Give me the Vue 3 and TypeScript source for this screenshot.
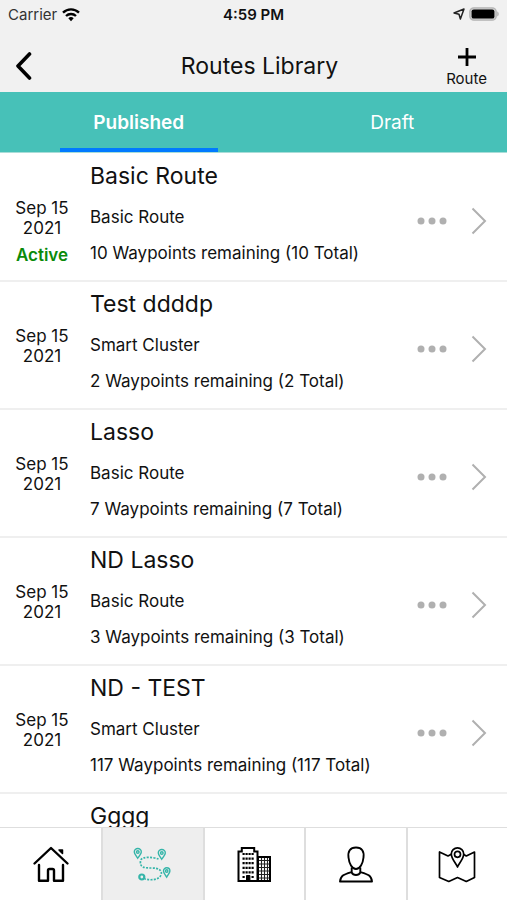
<script setup lang="ts">
import { ref } from 'vue'

interface RouteItem {
  name: string
  day?: string
  year?: string
  kind?: string
  remaining?: number
  total?: number
  active?: boolean
}

const tabs = ['Published', 'Draft']
const currentTab = ref('Published')
const currentPage = ref('Routes')

const routes: RouteItem[] = [
  { name: 'Basic Route', day: 'Sep 15', year: '2021', kind: 'Basic Route', remaining: 10, total: 10, active: true },
  { name: 'Test ddddp', day: 'Sep 15', year: '2021', kind: 'Smart Cluster', remaining: 2, total: 2 },
  { name: 'Lasso', day: 'Sep 15', year: '2021', kind: 'Basic Route', remaining: 7, total: 7 },
  { name: 'ND Lasso', day: 'Sep 15', year: '2021', kind: 'Basic Route', remaining: 3, total: 3 },
  { name: 'ND - TEST', day: 'Sep 15', year: '2021', kind: 'Smart Cluster', remaining: 117, total: 117 },
  { name: 'Gggg' },
]

const pages = ['Home', 'Routes', 'Companies', 'Profile', 'Map']
const windowRows = [0, 1, 2, 3, 4]
</script>

<template>
  <div class="screen">
    <div class="status">
      <div class="carrier">
        <span>Carrier</span>
        <svg width="20" height="15" viewBox="0 0 20 15" aria-hidden="true">
          <path d="M2 5.6a11.6 11.6 0 0 1 16 0" fill="none" stroke="#000" stroke-width="2.4" />
          <path d="M5 9a7.2 7.2 0 0 1 10 0" fill="none" stroke="#000" stroke-width="2.3" />
          <path d="M7.3 11.3a4 4 0 0 1 5.4 0L10 14.2z" />
        </svg>
      </div>
      <strong>4:59 PM</strong>
      <div class="power">
        <svg width="12" height="12" viewBox="0 0 12 12" aria-hidden="true">
          <path d="M11 1 7.4 11 6 6.2 1 5z" fill="none" stroke="#222" stroke-width="1.5" stroke-linejoin="round" />
        </svg>
        <svg width="30" height="14" viewBox="0 0 30 14" aria-hidden="true">
          <rect x=".8" y=".8" width="26.4" height="12.4" rx="4" fill="#ccc" stroke="#b5b5b5" stroke-width="1.3" />
          <rect x="2.6" y="2.4" width="22.8" height="9.2" rx="2.2" />
          <path d="M28.3 4.6c1.8.6 1.8 4.2 0 4.8z" fill="#aaa" />
        </svg>
      </div>
    </div>

    <header class="header">
      <button class="back" type="button" aria-label="Back">
        <svg width="18" height="28" viewBox="0 0 18 28" aria-hidden="true">
          <path d="M13.500 2 2 14l11.500 12" fill="none" stroke="#000" stroke-width="3.600" stroke-linecap="round" stroke-linejoin="round" />
        </svg>
      </button>
      <h1>Routes Library</h1>
      <button class="add" type="button">
        <svg width="20" height="20" viewBox="0 0 20 20" aria-hidden="true">
          <path d="M10 1v18M1 10h18" stroke="#000" stroke-width="2.8" />
        </svg>
        <span>Route</span>
      </button>
    </header>

    <nav class="tabs">
      <button
        v-for="tab in tabs"
        :key="tab"
        type="button"
        :class="['tab', { selected: tab === currentTab }]"
        @click="currentTab = tab"
      >
        <span>{{ tab }}</span>
      </button>
    </nav>

    <main class="list">
      <article v-for="route in routes" :key="route.name" class="route">
        <div class="date">
          <span v-if="route.day">{{ route.day }}</span>
          <span v-if="route.year">{{ route.year }}</span>
          <strong v-if="route.active">Active</strong>
        </div>
        <div class="info">
          <h2>{{ route.name }}</h2>
          <template v-if="route.kind">
            <p>{{ route.kind }}</p>
            <p>{{ route.remaining }} Waypoints remaining ({{ route.total }} Total)</p>
          </template>
        </div>
        <button class="more" type="button" aria-label="More">
          <svg width="30" height="8" viewBox="0 0 30 8" fill="#b0b0b0" aria-hidden="true">
            <circle cx="4" cy="4" r="3.5" />
            <circle cx="15" cy="4" r="3.5" />
            <circle cx="26" cy="4" r="3.5" />
          </svg>
        </button>
        <button class="open" type="button" aria-label="Open">
          <svg width="16" height="28" viewBox="0 0 16 28" aria-hidden="true">
            <path d="M1.500 1.500 14 14 1.500 26.500" fill="none" stroke="#b0b0b0" stroke-width="2" />
          </svg>
        </button>
      </article>
    </main>

    <nav class="bottom">
      <button
        v-for="page in pages"
        :key="page"
        type="button"
        :aria-label="page"
        :class="{ current: page === currentPage }"
        @click="currentPage = page"
      >
        <svg width="40" height="40" viewBox="0 0 40 40" fill="none" stroke="#000" aria-hidden="true">
          <g v-if="page === 'Home'" stroke-width="2.4" stroke-linecap="round" stroke-linejoin="round">
            <path d="M3.5 19.500 20 4l16.500 15.500" />
            <path d="M8 21v15.800h9V26.500q0-1.500 1.500-1.500h3q1.500 0 1.500 1.500v10.300h9V21" />
            <path d="M28 6h3.500v3.500z" fill="#000" stroke-width="1.500" />
          </g>
          <g v-else-if="page === 'Routes'" stroke="#35b5a9">
            <path d="M25.500 15C20 13 8 12 7.500 17c-1 7 5 7 11 7 8 0 11 3 9.500 7-2 5-10 5.500-16 4" stroke-width="1.700" stroke-dasharray="2 1.300" />
            <g stroke-width="1.400">
              <path d="M4.700 14.200C2.500 10.700 1.300 9.700 1.300 8a3.500 3.500 0 0 1 7 0c0 1.700-1.300 2.700-3.600 6.200z" />
              <circle cx="4.800" cy="8" r="1.300" />
              <path d="M28.700 15.200c-2.200-3.500-3.400-4.500-3.400-6.200a3.500 3.500 0 0 1 7 0c0 1.700-1.300 2.700-3.600 6.200z" />
              <circle cx="28.800" cy="9" r="1.300" />
              <path d="M33.700 33.200c-2.200-3.500-3.200-4.500-3.200-6.200a3.200 3.200 0 0 1 6.400 0c0 1.700-1.100 2.700-3.200 6.200z" />
              <circle cx="33.700" cy="27" r="1.200" />
            </g>
            <circle cx="8.800" cy="33" r="2.500" stroke-width="2.200" />
          </g>
          <g v-else-if="page === 'Companies'">
            <path d="M4.500 37V7.500h3.300V4h12.400v3.500h3.300V37zM24 13h12v24H24z" stroke-width="2" />
            <path d="M12.500 37v-5.500h3.400V37z" fill="#000" />
            <g stroke-width="2.200" stroke-dasharray="2.200 .8">
              <path v-for="row in windowRows" :key="row" :d="`M8.500 ${10 + row * 4.6}h11.200`" />
              <path d="M8.500 33h2.200M17.500 33h2.200" />
            </g>
            <path d="M25 16.500h10M25 20h10M25 23.500h10M25 27h10M25 30.500h10M25 34h10M27.500 14v22M30.500 14v22M33.500 14v22" stroke-width="1.100" stroke="#222" />
          </g>
          <g v-else-if="page === 'Profile'" stroke-width="1.900" stroke-linejoin="round">
            <path d="M20 3.500c6 0 8.300 4 7.500 10-.6 6-3.500 11.500-7.500 11.500s-6.900-5.500-7.500-11.500C11.700 7.500 14 3.500 20 3.500z" />
            <path d="M15.700 23.500v5c1.500 3.300 7.100 3.300 8.600 0v-5M15.700 28C9 30 4.500 31 4 37.500h32c-.5-6.500-5-7.500-11.700-9.500" />
          </g>
          <g v-else stroke-width="1.700" stroke-linejoin="round">
            <path d="M14.300 10.200 11 12 2.500 8v25.500l9.300 4 8.700-4 8.800 4 8.200-4V8l-8.200 4-3-1.800" />
            <path d="M20.500 23c-1.500-4-6.200-8-6.200-13a6.200 6.200 0 0 1 12.400 0c0 5-4.700 9-6.200 13z" />
            <circle cx="20.500" cy="10.300" r="3" />
          </g>
        </svg>
      </button>
    </nav>
  </div>
</template>

<style>
body {
  margin: 0;
}
</style>

<style scoped>
.screen {
  display: flex;
  flex-direction: column;
  height: 100vh;
  background: #fff;
  color: #111;
  font-family: Inter, "Liberation Sans", sans-serif;
  font-size: 17px;
}

button {
  padding: 0;
  border: 0;
  background: none;
  color: inherit;
  font: inherit;
  cursor: pointer;
}

svg {
  display: block;
}

h1,
h2,
p {
  margin: 0;
  font-weight: 400;
}

.status,
.header {
  display: grid;
  grid-template-columns: 1fr auto 1fr;
  align-items: center;
  background: #f1f1f1;
}

.status {
  height: 28px;
  padding: 0 8px;
  font-size: 15px;
}

.status strong {
  font-weight: 600;
}

.carrier,
.power {
  display: flex;
  align-items: center;
  gap: 4px;
}

.carrier {
  color: #333;
}

.power {
  justify-content: flex-end;
}

.header {
  height: 64px;
  padding: 0 16px;
  box-sizing: border-box;
}

.header h1 {
  padding-top: 12px;
  padding-left: 12px;
  font-size: 23px;
  line-height: 30px;
}

.back {
  justify-self: start;
  padding-top: 12px;
}

.add {
  display: flex;
  flex-direction: column;
  align-items: center;
  justify-self: end;
  gap: 2px;
  padding-top: 16px;
  padding-right: 4px;
  font-size: 15px;
  line-height: 20px;
}

.tabs {
  display: flex;
  height: 60px;
  border-bottom: 1px solid #a9ddd8;
  background: #47c1b8;
  color: #fff;
  font-size: 19px;
}

.tab {
  display: flex;
  flex: 1;
  justify-content: center;
  padding-left: 24px;
}

.tab span {
  display: flex;
  align-items: center;
  justify-content: center;
  box-sizing: border-box;
  width: 158px;
  height: 100%;
  border-top: 4px solid transparent;
  border-bottom: 4px solid transparent;
}

.selected span {
  border-bottom-color: #007aff;
  font-weight: 600;
}

.list {
  flex: 1;
  min-height: 0;
  padding-top: 1px;
  overflow: hidden;
}

.route {
  display: flex;
  align-items: flex-start;
  box-sizing: border-box;
  height: 128px;
  padding-right: 20px;
  border-bottom: 2px solid #efefef;
}

.date {
  display: flex;
  flex-direction: column;
  align-items: center;
  width: 84px;
  padding-top: 44px;
  line-height: 20px;
}

.date strong {
  margin-top: 7px;
  color: #0a8a0a;
  font-weight: 600;
}

.info {
  display: flex;
  flex: 1;
  flex-direction: column;
  gap: 16px;
  padding-top: 7px;
  padding-left: 6px;
  line-height: 20px;
  white-space: nowrap;
}

.info h2 {
  font-size: 23px;
  line-height: 30px;
}

.more,
.open {
  align-self: center;
  padding-top: 8px;
}

.open {
  margin-left: 24px;
}

.bottom {
  display: grid;
  grid-template-columns: repeat(5, 1fr);
  height: 72px;
  border-top: 1px solid #dedede;
  background: #fff;
}

.bottom button {
  display: flex;
  align-items: center;
  justify-content: center;
  border-left: 2px solid #dedede;
}

.bottom button:first-child {
  border-left: 0;
}

.bottom .current {
  background: #eee;
}
</style>
